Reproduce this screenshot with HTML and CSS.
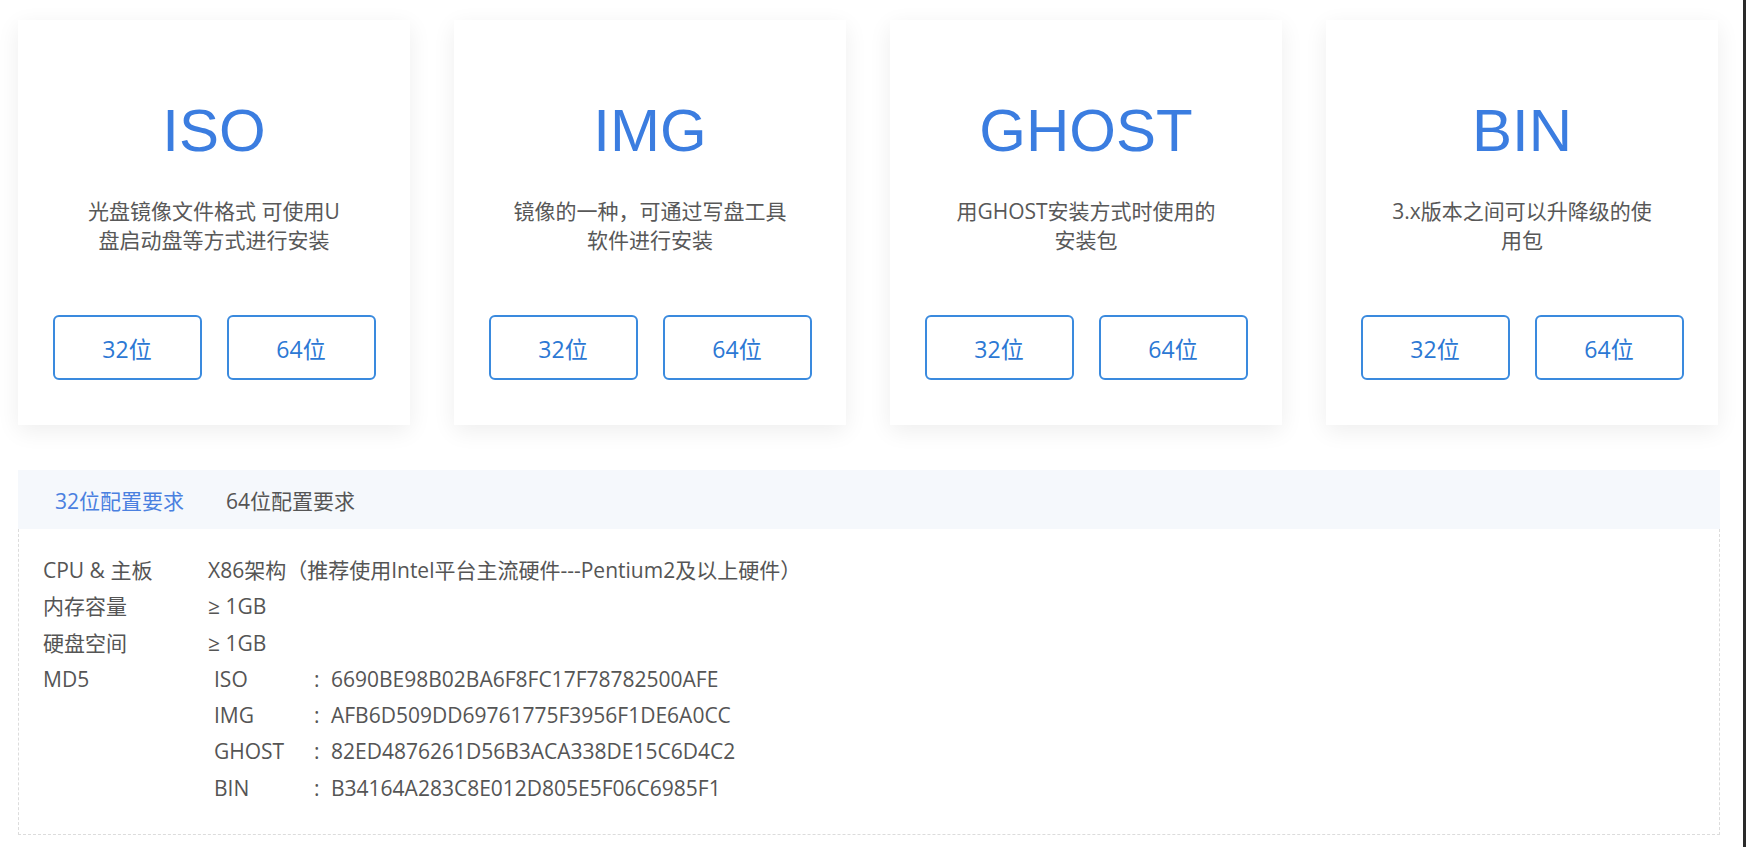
FILE: index.html
```html
<!DOCTYPE html>
<html lang="zh-CN">
<head>
    <meta charset="UTF-8">
    <meta name="viewport" content="width=device-width, initial-scale=1.0">
    <title>下载</title>
    <link rel="stylesheet" href="styles.css">
</head>
<body>
  <div class="page">
    <div class="cards">
      <div class="card">
        <h2 class="card-title">ISO</h2>
        <p class="card-desc">光盘镜像文件格式 可使用U<br>盘启动盘等方式进行安装</p>
        <div class="card-btns">
          <a class="btn" href="#">32位</a>
          <a class="btn" href="#">64位</a>
        </div>
      </div>
      <div class="card">
        <h2 class="card-title">IMG</h2>
        <p class="card-desc">镜像的一种，可通过写盘工具<br>软件进行安装</p>
        <div class="card-btns">
          <a class="btn" href="#">32位</a>
          <a class="btn" href="#">64位</a>
        </div>
      </div>
      <div class="card">
        <h2 class="card-title">GHOST</h2>
        <p class="card-desc">用GHOST安装方式时使用的<br>安装包</p>
        <div class="card-btns">
          <a class="btn" href="#">32位</a>
          <a class="btn" href="#">64位</a>
        </div>
      </div>
      <div class="card">
        <h2 class="card-title">BIN</h2>
        <p class="card-desc">3.x版本之间可以升降级的使<br>用包</p>
        <div class="card-btns">
          <a class="btn" href="#">32位</a>
          <a class="btn" href="#">64位</a>
        </div>
      </div>
    </div>

    <div class="spec">
      <div class="spec-tabs">
        <span class="tab active">32位配置要求</span>
        <span class="tab">64位配置要求</span>
      </div>
      <div class="spec-body">
        <div class="row">
          <div class="label">CPU &amp; 主板</div>
          <div class="value">X86架构（推荐使用Intel平台主流硬件---Pentium2及以上硬件）</div>
        </div>
        <div class="row">
          <div class="label">内存容量</div>
          <div class="value">≥ 1GB</div>
        </div>
        <div class="row">
          <div class="label">硬盘空间</div>
          <div class="value">≥ 1GB</div>
        </div>
        <div class="row">
          <div class="label">MD5</div>
          <div class="value md5">
            <span>ISO</span><span class="colon">:</span><span>6690BE98B02BA6F8FC17F78782500AFE</span>
            <span>IMG</span><span class="colon">:</span><span>AFB6D509DD69761775F3956F1DE6A0CC</span>
            <span>GHOST</span><span class="colon">:</span><span>82ED4876261D56B3ACA338DE15C6D4C2</span>
            <span>BIN</span><span class="colon">:</span><span>B34164A283C8E012D805E5F06C6985F1</span>
          </div>
        </div>
      </div>
    </div>
  </div>
</body>
</html>
```

FILE: styles.css
```css
  *{
      box-sizing: border-box;
  }
  body{
      margin: 0;
      background: #fff;
      font-family: "Open Sans", "Noto Sans CJK SC", sans-serif;
      color: #555;
      min-height: 100vh;
      border-right: 3px solid #2a2a2a;
  }
  .page{
      padding: 20px 23px 0 18px;
  }

  /* download cards */
  .cards{
      display: flex;
      gap: 44px;
  }
  .card{
      width: 392px;
      height: 405px;
      background: #fff;
      box-shadow: 0 6px 22px rgba(0, 0, 0, 0.07);
      display: flex;
      flex-direction: column;
      align-items: center;
      padding-top: 80px;
  }
  .card-title{
      margin: 0;
      font-family: "Liberation Sans", Arial, sans-serif;
      font-weight: normal;
      font-size: 60px;
      line-height: 62px;
      color: #3b7de0;
  }
  .card-desc{
      margin: 35px 0 0;
      font-size: 21px;
      line-height: 29px;
      color: #585858;
      text-align: center;
  }
  .card-btns{
      display: flex;
      gap: 25px;
      margin-top: 60px;
  }
  .btn{
      width: 149px;
      height: 65px;
      border: 2px solid #3a8ade;
      border-radius: 6px;
      display: flex;
      align-items: center;
      justify-content: center;
      font-size: 23px;
      color: #2c78d4;
      text-decoration: none;
  }

  /* requirements */
  .spec{
      margin-top: 45px;
  }
  .spec-tabs{
      height: 59px;
      background: #f5f8fc;
      display: flex;
      align-items: center;
      gap: 42px;
      padding-left: 37px;
      font-size: 21px;
  }
  .tab{
      color: #555;
  }
  .tab.active{
      color: #4a80e0;
  }
  .spec-body{
      border: 1px dashed #dcdcdc;
      border-top: none;
      height: 306px;
      padding: 23px 24px 0;
      font-size: 21px;
      line-height: 36.3px;
  }
  .row{
      display: flex;
  }
  .label{
      width: 165px;
      flex-shrink: 0;
  }
  .md5{
      display: grid;
      grid-template-columns: 100px 17px auto;
      margin-left: 6px;
  }
```
